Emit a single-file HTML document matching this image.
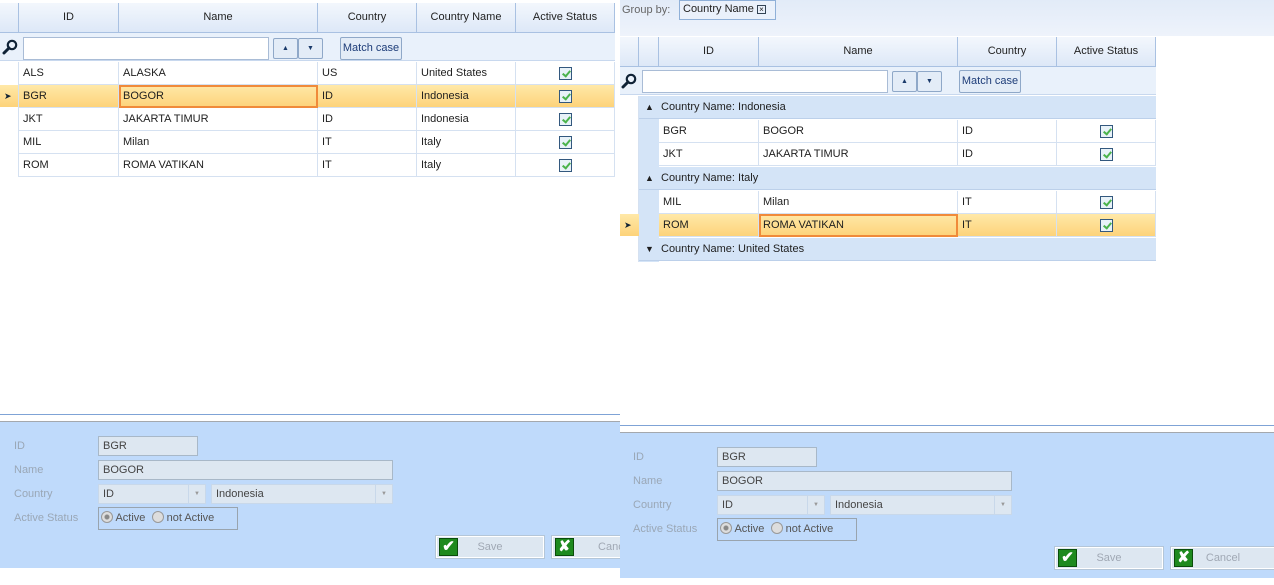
<!DOCTYPE html>
<html><head><meta charset="utf-8"><style>
*{box-sizing:border-box;margin:0;padding:0}
body{width:1274px;height:585px;position:relative;overflow:hidden;background:#fff;font-family:"Liberation Sans",sans-serif;font-size:11px;color:#1e1e1e}
.a{position:absolute}
.hd{position:absolute;height:30px;background:linear-gradient(#f3f7fd,#dde8f7);border-right:1px solid #a9c1e2;border-bottom:1px solid #a9c1e2;text-align:center;line-height:29px;color:#222;font-size:11px}
.cell{position:absolute;height:23px;line-height:23px;border-right:1px solid #d5e1f1;border-bottom:1px solid #d5e1f1;padding-left:4px;white-space:nowrap}
.sel{background:linear-gradient(#ffe9a8,#fdd37a)}
.chk{position:absolute;width:13px;height:13px;border:1px solid #33587e;background:#e8f2f8}
.chk:after{content:"";position:absolute;left:4px;top:1px;width:3px;height:6px;border:solid #4bb34b;border-width:0 2px 2px 0;transform:rotate(40deg)}
.grp{position:absolute;height:23px;background:#d4e4f7;border-bottom:1px solid #bcd0ea;line-height:22px}
.lbl{position:absolute;color:#9aa7b6;font-size:11px}
.fld{position:absolute;height:20px;background:#dde7f1;border:1px solid #a8b8c8;line-height:18px;padding-left:4px;color:#444}
.btn{position:absolute;height:22px;background:#dde7f1;border:1px solid #fff;outline:1px solid #b4c6d8;color:#a0a8b4;line-height:20px;text-align:center}
.ico{position:absolute;left:2px;top:1px;width:19px;height:18px;background:#1e8a1e;border:1px solid #0b4d0b;color:#fff;font-weight:bold;font-size:15px;line-height:16px;text-align:center}
.mag{position:absolute;width:16px;height:16px}
</style></head><body>

<!-- LEFT GRID -->
<div class="hd" style="left:0;top:3px;width:19px"></div>
<div class="hd" style="left:19px;top:3px;width:100px">ID</div>
<div class="hd" style="left:119px;top:3px;width:199px">Name</div>
<div class="hd" style="left:318px;top:3px;width:99px">Country</div>
<div class="hd" style="left:417px;top:3px;width:99px">Country Name</div>
<div class="hd" style="left:516px;top:3px;width:99px">Active Status</div>
<div class="a" style="left:0;top:33px;width:615px;height:28px;background:#e9f1fb;border-bottom:1px solid #c8d8ee"></div>
<svg class="mag" style="left:2px;top:39px" viewBox="0 0 16 16"><circle cx="10" cy="6" r="4.2" fill="none" stroke="#0f2236" stroke-width="2.2"/><line x1="7" y1="9" x2="2" y2="14" stroke="#0f2236" stroke-width="3" stroke-linecap="round"/></svg>
<div class="a" style="left:23px;top:37px;width:246px;height:23px;background:#fff;border:1px solid #a9bcd6"></div>
<div class="a" style="left:273px;top:38px;width:25px;height:21px;background:#e3ecf7;border:1px solid #8fa8c8;border-radius:2px;text-align:center;font-size:7px;line-height:19px;color:#1a3a6a">&#9650;</div>
<div class="a" style="left:298px;top:38px;width:25px;height:21px;background:#e3ecf7;border:1px solid #8fa8c8;border-radius:2px;text-align:center;font-size:7px;line-height:19px;color:#1a3a6a">&#9660;</div>
<div class="a" style="left:340px;top:37px;width:62px;height:23px;background:#e3ecf7;border:1px solid #8fa8c8;border-radius:2px;text-align:center;line-height:21px;color:#1d3c78">Match case</div>

<div class="a sel" style="left:0;top:85px;width:615px;height:22px"></div>
<div class="a" style="left:4px;top:91px;font-size:9px;color:#123">&#10148;</div>

<div class="cell" style="left:19px;top:62px;width:100px">ALS</div><div class="cell" style="left:119px;top:62px;width:199px">ALASKA</div><div class="cell" style="left:318px;top:62px;width:99px">US</div><div class="cell" style="left:417px;top:62px;width:99px">United States</div><div class="cell" style="left:516px;top:62px;width:99px"></div><div class="chk" style="left:559px;top:67px"></div>
<div class="cell" style="left:19px;top:85px;width:100px">BGR</div><div class="cell" style="left:119px;top:85px;width:199px;border:2px solid #f08a3a;line-height:19px;padding-left:2px">BOGOR</div><div class="cell" style="left:318px;top:85px;width:99px">ID</div><div class="cell" style="left:417px;top:85px;width:99px">Indonesia</div><div class="cell" style="left:516px;top:85px;width:99px"></div><div class="chk" style="left:559px;top:90px"></div>
<div class="cell" style="left:19px;top:108px;width:100px">JKT</div><div class="cell" style="left:119px;top:108px;width:199px">JAKARTA TIMUR</div><div class="cell" style="left:318px;top:108px;width:99px">ID</div><div class="cell" style="left:417px;top:108px;width:99px">Indonesia</div><div class="cell" style="left:516px;top:108px;width:99px"></div><div class="chk" style="left:559px;top:113px"></div>
<div class="cell" style="left:19px;top:131px;width:100px">MIL</div><div class="cell" style="left:119px;top:131px;width:199px">Milan</div><div class="cell" style="left:318px;top:131px;width:99px">IT</div><div class="cell" style="left:417px;top:131px;width:99px">Italy</div><div class="cell" style="left:516px;top:131px;width:99px"></div><div class="chk" style="left:559px;top:136px"></div>
<div class="cell" style="left:19px;top:154px;width:100px">ROM</div><div class="cell" style="left:119px;top:154px;width:199px">ROMA VATIKAN</div><div class="cell" style="left:318px;top:154px;width:99px">IT</div><div class="cell" style="left:417px;top:154px;width:99px">Italy</div><div class="cell" style="left:516px;top:154px;width:99px"></div><div class="chk" style="left:559px;top:159px"></div>
<div class="a" style="left:18px;top:62px;width:1px;height:115px;background:#d5e1f1"></div>

<!-- LEFT FORM -->
<div class="a" style="left:0;top:414px;width:620px;height:1px;background:#7fa3d6"></div>
<div class="a" style="left:0;top:421px;width:620px;height:147px;background:#bfdafb;border-top:1px solid #a4a8ad"></div>
<div class="lbl" style="left:14px;top:440px">ID</div>
<div class="lbl" style="left:14px;top:464px">Name</div>
<div class="lbl" style="left:14px;top:488px">Country</div>
<div class="lbl" style="left:14px;top:512px">Active Status</div>
<div class="fld" style="left:98px;top:436px;width:100px">BGR</div>
<div class="fld" style="left:98px;top:460px;width:295px">BOGOR</div>
<div class="fld" style="left:98px;top:484px;width:108px;border-color:#c8d8ea">ID<span style="position:absolute;right:0;top:0;width:17px;height:18px;border-left:1px solid #c8d8ea;font-size:6px;color:#999;text-align:center">&#9660;</span></div>
<div class="fld" style="left:211px;top:484px;width:182px;border-color:#c8d8ea">Indonesia<span style="position:absolute;right:0;top:0;width:17px;height:18px;border-left:1px solid #c8d8ea;font-size:6px;color:#999;text-align:center">&#9660;</span></div>
<div class="a" style="left:98px;top:507px;width:140px;height:23px;border:1px solid #99a4ae;line-height:21px;color:#555;padding-left:2px"><span style="display:inline-block;width:12px;height:12px;border-radius:50%;border:1px solid #999;background:radial-gradient(#888 2px,#ddd 3px);vertical-align:-2px"></span> Active &nbsp;<span style="display:inline-block;width:12px;height:12px;border-radius:50%;border:1px solid #999;background:#ddd;vertical-align:-2px"></span> not Active</div>
<div class="btn" style="left:436px;top:536px;width:108px"><div class="ico">&#10004;</div>Save</div>
<div class="btn" style="left:552px;top:536px;width:108px"><div class="ico">&#10008;</div>&nbsp;&nbsp;&nbsp;&nbsp;&nbsp;&nbsp;Cancel</div>

<!-- RIGHT -->
<div class="a" style="left:620px;top:0;width:654px;height:585px;background:#fff"></div>
<div class="a" style="left:620px;top:0;width:654px;height:36px;background:linear-gradient(#e2ebf8,#eef3fb)"></div>
<div class="a" style="left:622px;top:4px;color:#666">Group by:</div>
<div class="a" style="left:679px;top:0;width:97px;height:20px;border:1px solid #8fb0d8;background:#eaf1fb;padding-left:3px;line-height:17px;color:#222">Country Name <span style="display:inline-block;width:9px;height:9px;border:1px solid #345;font-size:8px;line-height:7px;text-align:center">&#215;</span></div>

<div class="hd" style="left:620px;top:37px;width:19px"></div>
<div class="hd" style="left:639px;top:37px;width:20px"></div>
<div class="hd" style="left:659px;top:37px;width:100px">ID</div>
<div class="hd" style="left:759px;top:37px;width:199px">Name</div>
<div class="hd" style="left:958px;top:37px;width:99px">Country</div>
<div class="hd" style="left:1057px;top:37px;width:99px">Active Status</div>
<div class="a" style="left:620px;top:67px;width:536px;height:28px;background:#e9f1fb;border-bottom:1px solid #c8d8ee"></div>
<svg class="mag" style="left:621px;top:73px" viewBox="0 0 16 16"><circle cx="10" cy="6" r="4.2" fill="none" stroke="#0f2236" stroke-width="2.2"/><line x1="7" y1="9" x2="2" y2="14" stroke="#0f2236" stroke-width="3" stroke-linecap="round"/></svg>
<div class="a" style="left:642px;top:70px;width:246px;height:23px;background:#fff;border:1px solid #a9bcd6"></div>
<div class="a" style="left:892px;top:71px;width:25px;height:21px;background:#e3ecf7;border:1px solid #8fa8c8;border-radius:2px;text-align:center;font-size:7px;line-height:19px;color:#1a3a6a">&#9650;</div>
<div class="a" style="left:917px;top:71px;width:25px;height:21px;background:#e3ecf7;border:1px solid #8fa8c8;border-radius:2px;text-align:center;font-size:7px;line-height:19px;color:#1a3a6a">&#9660;</div>
<div class="a" style="left:959px;top:70px;width:62px;height:23px;background:#e3ecf7;border:1px solid #8fa8c8;border-radius:2px;text-align:center;line-height:21px;color:#1d3c78">Match case</div>

<div class="a" style="left:638px;top:96px;width:1px;height:166px;background:#d5e1f1"></div>
<div class="a" style="left:639px;top:96px;width:20px;height:166px;background:#d4e4f7"></div>
<div class="grp" style="left:639px;top:96px;width:517px"><span style="position:absolute;left:6px;font-size:9px;font-weight:bold">&#9650;</span><span style="position:absolute;left:22px">Country Name: Indonesia</span></div>
<div class="grp" style="left:639px;top:167px;width:517px"><span style="position:absolute;left:6px;font-size:9px;font-weight:bold">&#9650;</span><span style="position:absolute;left:22px">Country Name: Italy</span></div>
<div class="grp" style="left:639px;top:238px;width:517px"><span style="position:absolute;left:6px;font-size:9px;font-weight:bold">&#9660;</span><span style="position:absolute;left:22px">Country Name: United States</span></div>

<div class="a sel" style="left:620px;top:214px;width:536px;height:22px"></div>
<div class="a" style="left:639px;top:214px;width:20px;height:23px;background:#d4e4f7"></div>
<div class="a" style="left:624px;top:220px;font-size:9px;color:#123">&#10148;</div>

<div class="cell" style="left:659px;top:120px;width:100px">BGR</div><div class="cell" style="left:759px;top:120px;width:199px">BOGOR</div><div class="cell" style="left:958px;top:120px;width:99px">ID</div><div class="cell" style="left:1057px;top:120px;width:99px"></div><div class="chk" style="left:1100px;top:125px"></div>
<div class="cell" style="left:659px;top:143px;width:100px">JKT</div><div class="cell" style="left:759px;top:143px;width:199px">JAKARTA TIMUR</div><div class="cell" style="left:958px;top:143px;width:99px">ID</div><div class="cell" style="left:1057px;top:143px;width:99px"></div><div class="chk" style="left:1100px;top:148px"></div>
<div class="cell" style="left:659px;top:191px;width:100px">MIL</div><div class="cell" style="left:759px;top:191px;width:199px">Milan</div><div class="cell" style="left:958px;top:191px;width:99px">IT</div><div class="cell" style="left:1057px;top:191px;width:99px"></div><div class="chk" style="left:1100px;top:196px"></div>
<div class="cell" style="left:659px;top:214px;width:100px">ROM</div><div class="cell" style="left:759px;top:214px;width:199px;border:2px solid #f08a3a;line-height:19px;padding-left:2px">ROMA VATIKAN</div><div class="cell" style="left:958px;top:214px;width:99px">IT</div><div class="cell" style="left:1057px;top:214px;width:99px"></div><div class="chk" style="left:1100px;top:219px"></div>

<!-- RIGHT FORM -->
<div class="a" style="left:620px;top:425px;width:654px;height:1px;background:#7fa3d6"></div>
<div class="a" style="left:620px;top:432px;width:654px;height:146px;background:#bfdafb;border-top:1px solid #a4a8ad"></div>
<div class="lbl" style="left:633px;top:451px">ID</div>
<div class="lbl" style="left:633px;top:475px">Name</div>
<div class="lbl" style="left:633px;top:499px">Country</div>
<div class="lbl" style="left:633px;top:523px">Active Status</div>
<div class="fld" style="left:717px;top:447px;width:100px">BGR</div>
<div class="fld" style="left:717px;top:471px;width:295px">BOGOR</div>
<div class="fld" style="left:717px;top:495px;width:108px;border-color:#c8d8ea">ID<span style="position:absolute;right:0;top:0;width:17px;height:18px;border-left:1px solid #c8d8ea;font-size:6px;color:#999;text-align:center">&#9660;</span></div>
<div class="fld" style="left:830px;top:495px;width:182px;border-color:#c8d8ea">Indonesia<span style="position:absolute;right:0;top:0;width:17px;height:18px;border-left:1px solid #c8d8ea;font-size:6px;color:#999;text-align:center">&#9660;</span></div>
<div class="a" style="left:717px;top:518px;width:140px;height:23px;border:1px solid #99a4ae;line-height:21px;color:#555;padding-left:2px"><span style="display:inline-block;width:12px;height:12px;border-radius:50%;border:1px solid #999;background:radial-gradient(#888 2px,#ddd 3px);vertical-align:-2px"></span> Active &nbsp;<span style="display:inline-block;width:12px;height:12px;border-radius:50%;border:1px solid #999;background:#ddd;vertical-align:-2px"></span> not Active</div>
<div class="btn" style="left:1055px;top:547px;width:108px"><div class="ico">&#10004;</div>Save</div>
<div class="btn" style="left:1171px;top:547px;width:104px"><div class="ico">&#10008;</div>Cancel</div>
</body></html>
